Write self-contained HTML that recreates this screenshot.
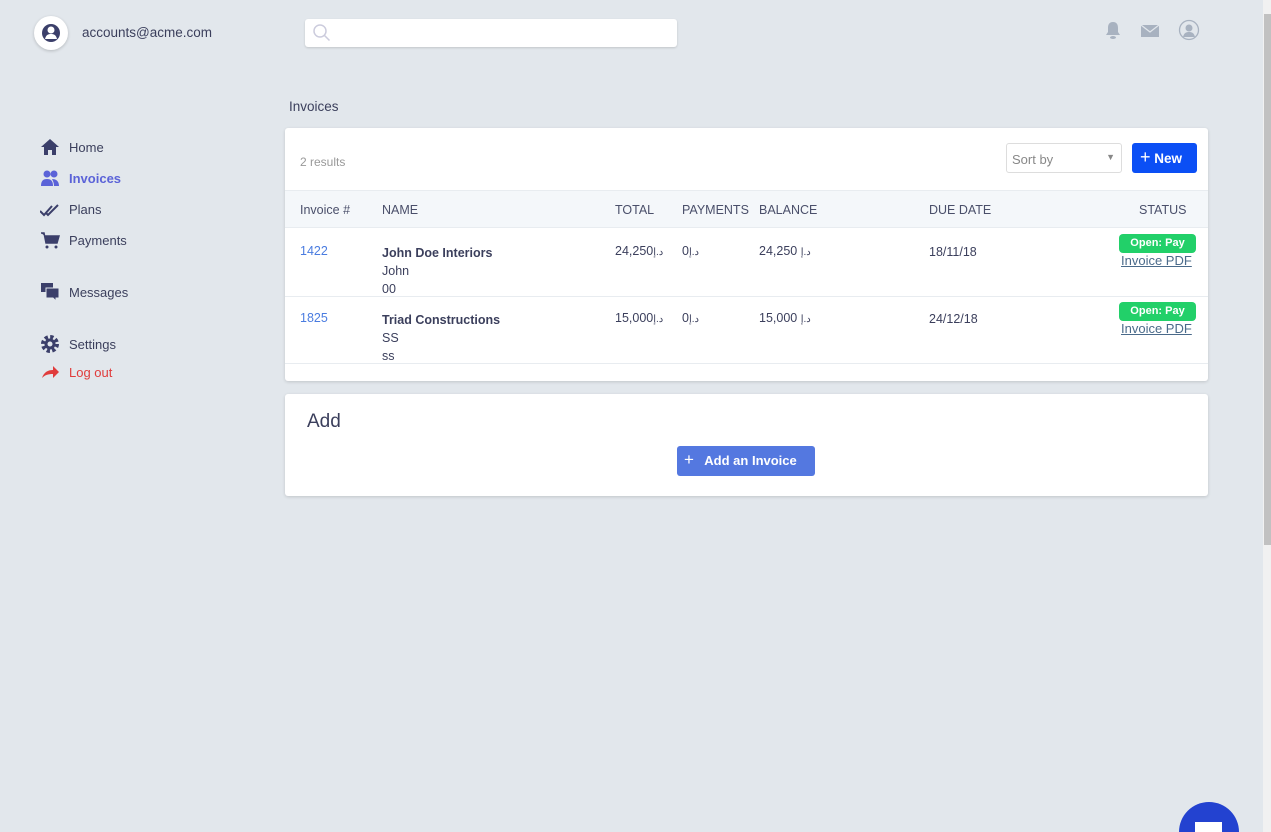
<!DOCTYPE html>
<html style="width:1271px;height:832px;overflow:hidden"><head><meta charset="utf-8"><style>
*{box-sizing:border-box;margin:0;padding:0}
body{width:1271px;height:832px;overflow:hidden;background:#e2e7ec;font-family:"Liberation Sans",sans-serif;color:#3b3f5c;position:relative;font-size:12.5px}
.abs{position:absolute}
.nav{position:absolute;left:40px;display:flex;align-items:center;font-size:13px;color:#3b3f5c}
.nav svg{width:20px;height:20px;margin-right:9px}
.card{position:absolute;background:#fff;border-radius:3px;box-shadow:0 1px 3px rgba(0,0,0,.15)}
.th{position:absolute;top:75px;font-size:12.5px;color:#4a4f6a}
.cell{position:absolute;font-size:12.5px;color:#3b3f5c}
.pay{position:absolute;left:834px;width:77px;height:19px;background:#22d069;color:#fff;border-radius:4px;font-size:11px;font-weight:bold;text-align:center;line-height:19px}
.pdf{position:absolute;left:836px;font-size:13px;color:#4a6a8a;text-decoration:underline}
.ar{font-size:10px}
</style></head><body>
<div class="abs" style="left:34px;top:16px;width:34px;height:34px;border-radius:50%;background:#fff;box-shadow:0 1px 3px rgba(0,0,0,.2)">
<svg width="34" height="34" viewBox="0 0 34 34"><circle cx="17" cy="17" r="9" fill="#3b3f6a"/><circle cx="17" cy="14" r="3.5" fill="#fff"/><path d="M11 23c1-4 3-5 6-5s5 1 6 5" fill="#fff"/></svg></div>
<div class="abs" style="left:82px;top:25px;font-size:13.5px">accounts@acme.com</div>
<div class="abs" style="left:305px;top:19px;width:372px;height:28px;background:#fff;border-radius:3px;box-shadow:0 1px 2px rgba(0,0,0,.15)">
<svg class="abs" style="left:7px;top:4px" width="20" height="20" viewBox="0 0 20 20"><circle cx="8" cy="8" r="6" fill="none" stroke="#ccd" stroke-width="1.5"/><path d="M12.5 12.5l5 5" stroke="#ccd" stroke-width="1.5"/></svg></div>
<svg class="abs" style="left:1103px;top:20px" width="20" height="22" viewBox="0 0 20 22"><path d="M10 2c-4 0-5 3-5 6v4l-2 3h14l-2-3V8c0-3-1-6-5-6z" fill="#a8b2c0"/><ellipse cx="10" cy="17.5" rx="3" ry="1.5" fill="#a8b2c0"/></svg>
<svg class="abs" style="left:1140px;top:24px" width="20" height="14" viewBox="0 0 20 14"><rect x="1" y="1" width="18" height="12" fill="#a8b2c0"/><path d="M1 1l9 7 9-7" fill="none" stroke="#e2e7ec" stroke-width="1.2"/></svg>
<svg class="abs" style="left:1178px;top:19px" width="22" height="22" viewBox="0 0 22 22"><circle cx="11" cy="11" r="9.5" fill="none" stroke="#a8b2c0" stroke-width="1.3"/><circle cx="11" cy="9" r="3.5" fill="#a8b2c0"/><path d="M5 18c1-4 3-5 6-5s5 1 6 5z" fill="#a8b2c0"/></svg>
<div class="abs" style="left:1263px;top:0;width:8px;height:832px;background:#f1f1f1"></div>
<div class="abs" style="left:1264px;top:14px;width:7px;height:531px;background:#c1c1c1"></div>

<div class="nav" style="top:137px"><svg viewBox="0 0 20 20"><path d="M10 2L1 10h3v8h4v-5h4v5h4v-8h3z" fill="#3b3f6a"/></svg>Home</div>
<div class="nav" style="top:168px;color:#5b63d8;font-weight:bold"><svg viewBox="0 0 20 20"><circle cx="7" cy="6" r="3.5" fill="#5b63d8"/><circle cx="14" cy="6" r="3.5" fill="#5b63d8"/><path d="M1 18c0-5 2-7 6-7s6 2 6 7zM12 11c4 0 7 2 7 7h-5c0-3-1-5-2-7z" fill="#5b63d8"/></svg>Invoices</div>
<div class="nav" style="top:199px"><svg viewBox="0 0 20 20"><path d="M0 12l4 4 8-9M6 14l2 2 10-10" fill="none" stroke="#3b3f6a" stroke-width="2"/></svg>Plans</div>
<div class="nav" style="top:230px"><svg viewBox="0 0 20 20"><path d="M1 3h3l2 10h11l2-7H5" fill="#3b3f6a" stroke="#3b3f6a" stroke-width="1.5"/><circle cx="7" cy="17" r="1.5" fill="#3b3f6a"/><circle cx="16" cy="17" r="1.5" fill="#3b3f6a"/></svg>Payments</div>
<div class="nav" style="top:282px"><svg viewBox="0 0 20 20"><rect x="1" y="1" width="12" height="9" fill="#3b3f6a"/><path d="M6 6h13v10h-3v3l-3-3H6z" fill="#3b3f6a" stroke="#e2e7ec" stroke-width="1"/></svg>Messages</div>
<div class="nav" style="top:334px"><svg viewBox="0 0 20 20"><circle cx="10" cy="10" r="6.5" fill="none" stroke="#3b3f6a" stroke-width="5" stroke-dasharray="3 2.1"/><circle cx="10" cy="10" r="5.5" fill="#3b3f6a"/><circle cx="10" cy="10" r="2.5" fill="#e2e7ec"/></svg>Settings</div>
<div class="nav" style="top:362px;color:#e03c3c"><svg viewBox="0 0 20 20"><path d="M2 16c2-6 6-8 11-8V4l6 6-6 6v-4c-5 0-8 1-11 4z" fill="#e03c3c"/></svg>Log out</div>

<div class="abs" style="left:289px;top:99px;font-size:13.5px">Invoices</div>
<div class="card" style="left:285px;top:128px;width:923px;height:253px">
<div class="abs" style="left:15px;top:27px;font-size:12px;color:#999">2 results</div>
<div class="abs" style="left:721px;top:15px;width:116px;height:30px;border:1px solid #ddd;border-radius:3px;font-size:13px;color:#888;padding:8px 5px">Sort by<span style="position:absolute;right:6px;top:8px;font-size:9px">▼</span></div>
<div class="abs" style="left:847px;top:15px;width:65px;height:30px;background:#0b4ff5;border-radius:3px;color:#fff;font-weight:bold;font-size:13.5px;padding:6px 0 0 8px"><span style="font-size:18px;font-weight:normal;line-height:16px">+</span> New</div>
<div class="abs" style="left:0;top:62px;width:923px;height:38px;background:#f4f7fa;border-top:1px solid #e8ecf0;border-bottom:1px solid #e8ecf0"></div>
<div class="th" style="left:15px">Invoice #</div><div class="th" style="left:97px">NAME</div><div class="th" style="left:330px">TOTAL</div><div class="th" style="left:397px">PAYMENTS</div><div class="th" style="left:474px">BALANCE</div><div class="th" style="left:644px">DUE DATE</div><div class="th" style="left:854px">STATUS</div>
<div class="cell" style="left:15px;top:116px;color:#4a7ce0">1422</div>
<div class="cell" style="left:97px;top:116px;line-height:18px"><b>John Doe Interiors</b><br>John<br>00</div>
<div class="cell" style="left:330px;top:116px">24,250<span class="ar">د.إ</span></div>
<div class="cell" style="left:397px;top:116px">0<span class="ar">د.إ</span></div>
<div class="cell" style="left:474px;top:116px">24,250 <span class="ar">د.إ</span></div>
<div class="cell" style="left:644px;top:117px">18/11/18</div>
<div class="pay" style="top:106px">Open: Pay</div><div class="pdf" style="top:125px">Invoice PDF</div>
<div class="abs" style="left:0;top:168px;width:923px;height:1px;background:#e8ecf0"></div>
<div class="cell" style="left:15px;top:183px;color:#4a7ce0">1825</div>
<div class="cell" style="left:97px;top:183px;line-height:18px"><b>Triad Constructions</b><br>SS<br>ss</div>
<div class="cell" style="left:330px;top:183px">15,000<span class="ar">د.إ</span></div>
<div class="cell" style="left:397px;top:183px">0<span class="ar">د.إ</span></div>
<div class="cell" style="left:474px;top:183px">15,000 <span class="ar">د.إ</span></div>
<div class="cell" style="left:644px;top:184px">24/12/18</div>
<div class="pay" style="top:174px">Open: Pay</div><div class="pdf" style="top:193px">Invoice PDF</div>
<div class="abs" style="left:0;top:235px;width:923px;height:1px;background:#e8ecf0"></div>
</div>
<div class="card" style="left:285px;top:394px;width:923px;height:102px">
<div class="abs" style="left:22px;top:17px;font-size:19px;color:#3b3f5c">Add</div>
<div class="abs" style="left:392px;top:52px;width:138px;height:30px;background:#5478e0;border-radius:3px;color:#fff;font-weight:bold;font-size:13px;padding:7px 0 0 7px"><span style="font-size:17px;font-weight:normal;line-height:14px">+</span>&nbsp;&nbsp; Add an Invoice</div>
</div>
<div class="abs" style="left:1179px;top:802px;width:60px;height:30px;overflow:hidden"><div style="width:60px;height:60px;border-radius:50%;background:#2342d0"></div></div>
<div class="abs" style="left:1195px;top:822px;width:27px;height:10px;background:#fff"></div>
</body></html>
